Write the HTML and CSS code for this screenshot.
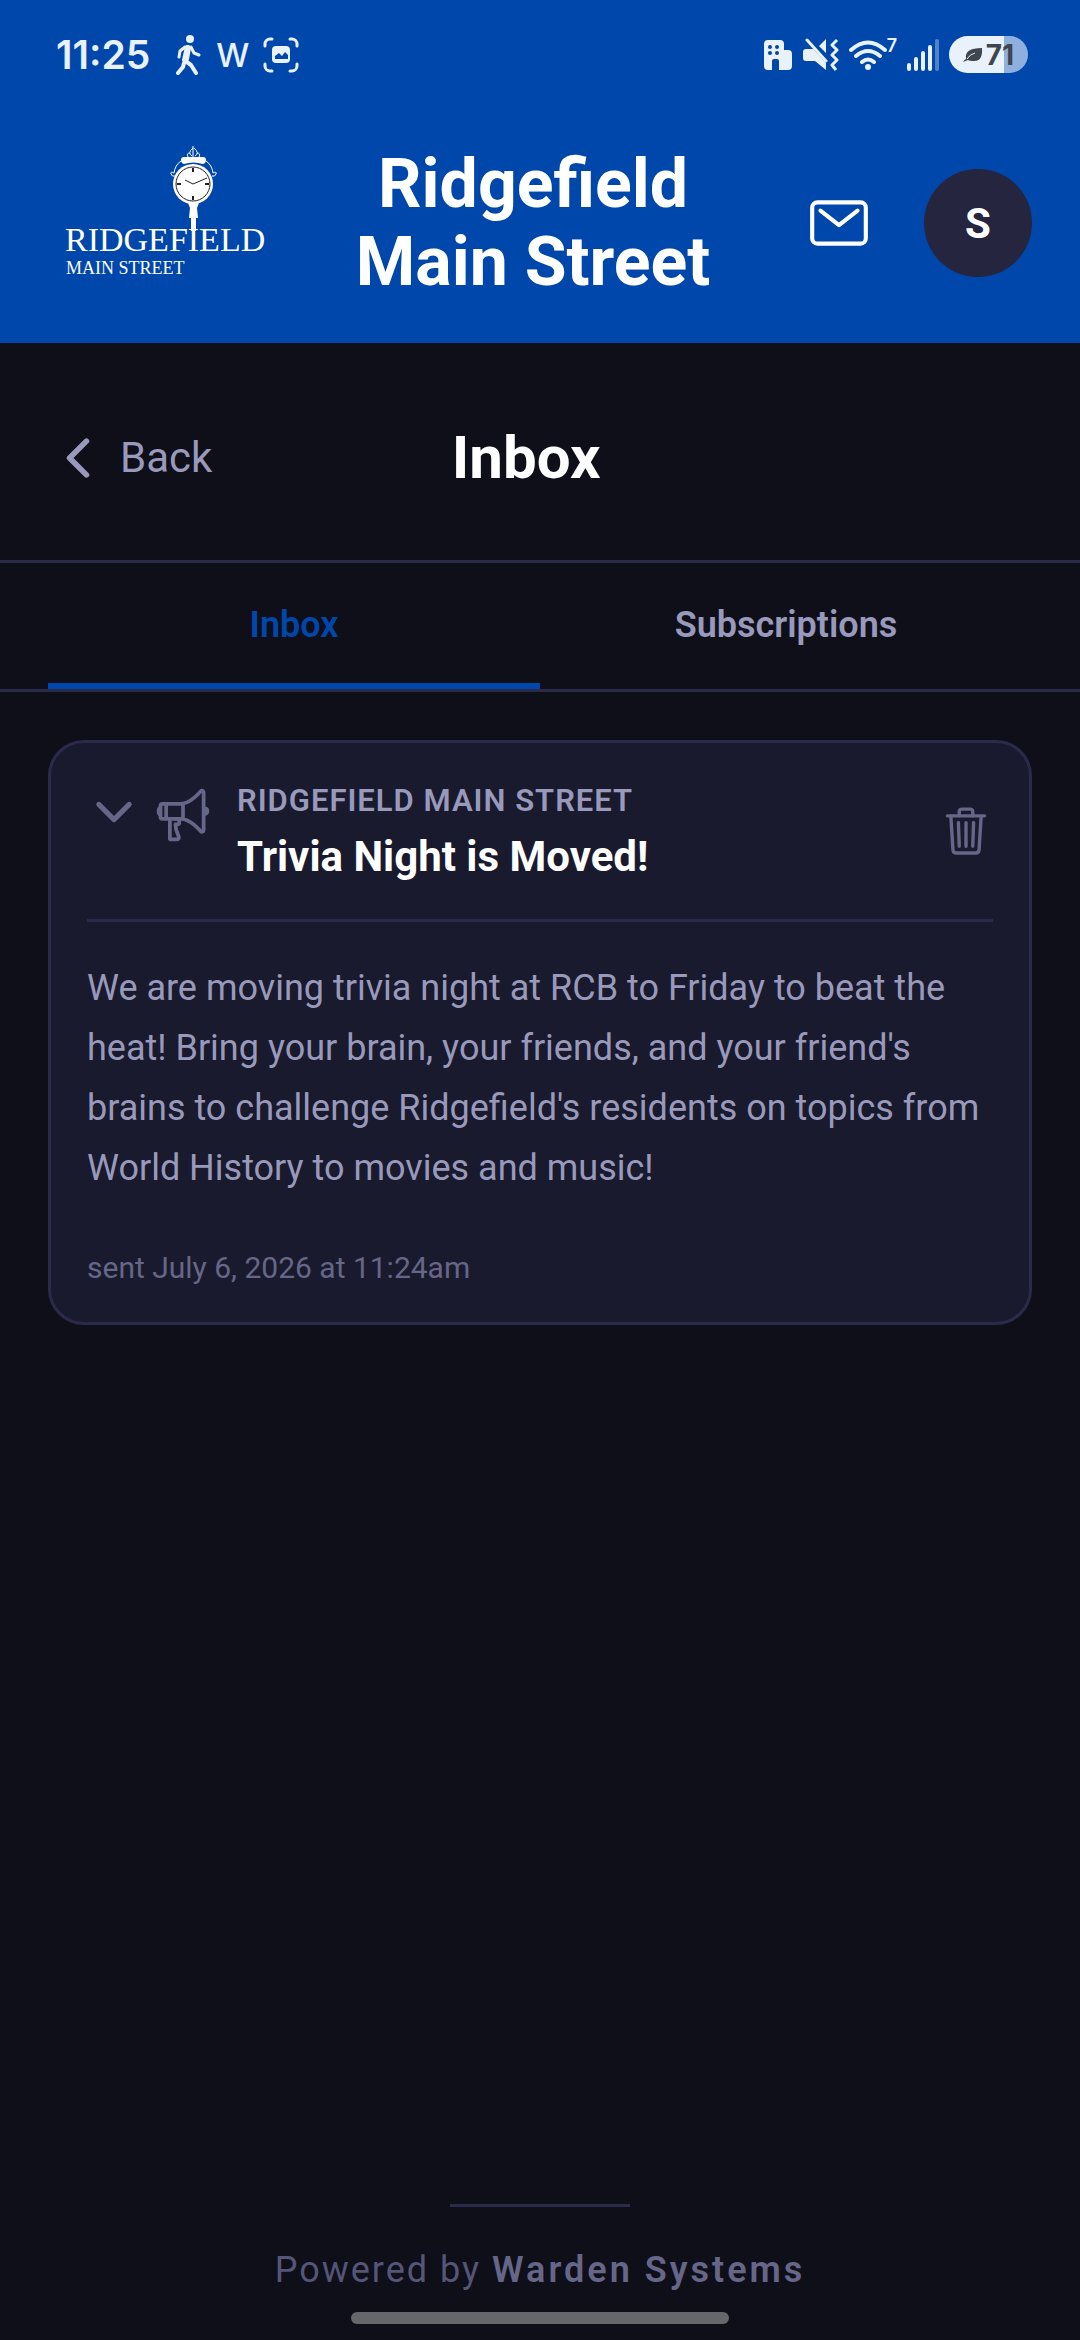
FILE: index.html
```html
<!DOCTYPE html>
<html lang="en">
<head>
  <meta charset="UTF-8">
  <meta name="viewport" content="width=device-width, initial-scale=1.0">
  <title>Inbox - Ridgefield Main Street</title>
  <link rel="stylesheet" href="styles.css">
</head>
<body>
  <header class="top">
    <div class="status">
      <div class="status-left">
        <span class="clock">11:25</span>
        <svg width="26" height="40" viewBox="0 0 26 40" fill="none" stroke="#e9f1fb" stroke-width="4" stroke-linecap="round" stroke-linejoin="round">
          <circle cx="14" cy="4" r="4" fill="#e9f1fb" stroke="none"/>
          <path d="M11 12L8 25l7 5 5 8" stroke-width="4"/>
          <path d="M12 13l-2 11" stroke-width="6"/>
          <path d="M8 28l-1 4-5 6" stroke-width="4"/>
          <path d="M9 12l-5 4-1 6M15 12l3 6 5 2" stroke-width="3"/>
        </svg>
        <span class="wear">W</span>
        <svg width="36" height="36" viewBox="0 0 36 36" fill="none" stroke="#e9f1fb" stroke-width="3" stroke-linecap="round">
          <path d="M2 9V7a5 5 0 015-5h2M27 2h2a5 5 0 015 5v2M34 27v2a5 5 0 01-5 5h-2M9 34H7a5 5 0 01-5-5v-2"/>
          <rect x="9" y="9" width="18" height="17" rx="4" fill="#e9f1fb" stroke="none"/>
          <path d="M12 22v-3l4-3 3 3 3-4 3 3v4z" fill="#0047ab" stroke="none"/>
        </svg>
      </div>
      <div class="status-right">
        <svg width="30" height="32" viewBox="0 0 30 32">
          <path d="M5 1h12q4 0 4 4v6h4q4 0 4 4v12q0 4-4 4H16v-9q0-2-2-2h-3q-2 0-2 2v9H5q-4 0-4-4V5q0-4 4-4z" fill="#e9f1fb"/>
          <g fill="#0047ab"><circle cx="7" cy="8" r="2"/><circle cx="14" cy="8" r="2"/><circle cx="7" cy="14" r="2"/><circle cx="14" cy="14" r="2"/></g>
        </svg>
        <svg width="36" height="34" viewBox="0 0 36 34" fill="#e9f1fb">
          <path d="M3 11h8l12 13v8L12 23H3q-3 0-3-3v-6q0-3 3-3zM16 8l7-7v14z"/>
          <path d="M4 2l22 24" stroke="#0047ab" stroke-width="3"/>
          <path d="M4 2l19 21" stroke="#e9f1fb" stroke-width="3" stroke-linecap="round"/>
          <path d="M34 2l-5 5 5 5-5 5 5 5-5 5 4 5" fill="none" stroke="#e9f1fb" stroke-width="3" stroke-linejoin="round"/>
        </svg>
        <span class="wifi">
          <svg width="38" height="32" viewBox="0 0 38 32" fill="none" stroke="#e9f1fb" stroke-width="4" stroke-linecap="round">
            <path d="M2 11q17-15 34 0M7 17q12-10 24 0M13 23q6-5 12 0"/>
            <circle cx="19" cy="28" r="3" fill="#e9f1fb" stroke="none"/>
          </svg>
          <sup>7</sup>
        </span>
        <svg width="32" height="34" viewBox="0 0 32 34" stroke="#e9f1fb" stroke-width="4" stroke-linecap="round">
          <path d="M2 27v4M9 21v10M16 15v16M23 9v22"/>
          <path d="M30 3v28" opacity=".35"/>
        </svg>
        <span class="battery">
          <svg width="20" height="16" viewBox="0 0 20 16"><path d="M19 1q1 14-9 13-4 0-5-1l-5 2q1-2 3-3-2-11 16-11z" fill="#41454f"/><path d="M4 12q3-5 8-6" fill="none" stroke="#e9f1fb" stroke-width="1"/></svg>
          71
        </span>
      </div>
    </div>

    <div class="brand">
      <svg class="logo" viewBox="0 0 224 156" role="img" aria-label="Ridgefield Main Street logo">
        <!-- finial and side scrolls -->
        <g fill="none" stroke="#fff" stroke-width="1">
          <path d="M145 1v11M145 3q-6 5-1 8M146 3q6 5 1 8M140 12q-2-4 2-4M151 12q2-4-2-4"/>
          <path d="M133 16q-6 4-7 12M126 28q-4-2-3 1t4 2M158 16q6 4 7 12M165 28q4-2 3 1t-4 2"/>
        </g>
        <path d="M136 12h19q3 0 3 3t-3 4q-10-3-19 0-3-1-3-4t3-3z" fill="#fff"/>
        <circle cx="145" cy="39" r="20" fill="#fff"/>
        <circle cx="145" cy="39" r="17" fill="#fff" stroke="#222" stroke-width="1"/>
        <path d="M145 23v4M145 51v4M129 39h4M157 39h4" stroke="#222" stroke-width="2"/>
        <path d="M137 35l8 4 14-6" fill="none" stroke="#222" stroke-width="1"/>
        <path d="M140 58h11l-2 5 1 10h-2v13h-5V73h-2l1-10z" fill="#fff"/>
        <text class="logo-name" x="17" y="106">RIDGEFIELD</text>
        <text class="logo-sub" x="18" y="129">MAIN STREET</text>
      </svg>
      <h1>Ridgefield Main Street</h1>
      <div class="actions">
        <button type="button" class="mail" aria-label="Messages">
          <svg width="66" height="66" viewBox="0 0 512 512" class="line-icon">
            <rect x="48" y="96" width="416" height="320" rx="40" ry="40"/>
            <path d="M112 160l144 112 144-112"/>
          </svg>
        </button>
        <button type="button" class="avatar">S</button>
      </div>
    </div>
  </header>

  <div class="page-head">
    <a href="#" class="back">
      <svg width="60" height="60" viewBox="0 0 512 512" class="line-icon thick"><path d="M328 112L184 256l144 144"/></svg>
      <span>Back</span>
    </a>
    <h2>Inbox</h2>
    <div class="spacer"></div>
  </div>

  <nav class="tabs">
    <button type="button" class="tab active">Inbox</button>
    <button type="button" class="tab">Subscriptions</button>
  </nav>

  <main>
    <article class="card">
      <div class="card-head">
        <button type="button" class="icon-btn toggle" aria-label="Collapse">
          <svg width="54" height="54" viewBox="0 0 512 512" class="line-icon thick"><path d="M112 184l144 144 144-144"/></svg>
        </button>
        <svg width="60" height="60" viewBox="0 0 512 512" class="line-icon megaphone">
          <path d="M407.940 52.220S321.300 160 240 160H80a16 16 0 00-16 16v96a16 16 0 0016 16h160c81.300 0 167.940 108.230 167.940 108.230 6.060 8 24.060 2.520 24.060-9.830V62c0-12.310-17-18.820-24.060-9.780zM64 256s-16-6-16-32 16-32 16-32M448 246s16-4.330 16-22-16-22-16-22M256 160v128M112 160v128"/>
          <path d="M144 288v168a8 8 0 008 8h53a16 16 0 0015.290-20.730C211.910 416.390 192 386.080 192 336h16a16 16 0 0016-16v-16a16 16 0 00-16-16h-16"/>
        </svg>
        <div class="card-title">
          <p>RIDGEFIELD MAIN STREET</p>
          <h3>Trivia Night is Moved!</h3>
        </div>
        <button type="button" class="icon-btn" aria-label="Delete">
          <svg width="54" height="54" viewBox="0 0 512 512" class="line-icon">
            <path d="M112 112l20 320c.95 18.490 14.400 32 32 32h184c17.670 0 30.870-13.510 32-32l20-320M80 112h352"/>
            <path d="M192 112V72a24 24 0 0124-24h80a24 24 0 0124 24v40M256 176v224M184 176l8 224M328 176l-8 224"/>
          </svg>
        </button>
      </div>
      <div class="card-body">
        <p class="message">We are moving trivia night at RCB to Friday to beat the heat! Bring your brain, your friends, and your friend's brains to challenge Ridgefield's residents on topics from World History to movies and music!</p>
        <p class="sent">sent July 6, 2026 at 11:24am</p>
      </div>
    </article>
  </main>

  <footer>
    <div class="rule"></div>
    <p>Powered by <strong>Warden Systems</strong></p>
    <div class="home-bar"></div>
  </footer>
</body>
</html>
```

FILE: styles.css
```css
* {
  box-sizing: border-box;
}

body {
  margin: 0;
  min-height: 100vh;
  display: flex;
  flex-direction: column;
  background: #0f0f1a;
  color: #9999bb;
  font-family: Roboto, "Liberation Sans", sans-serif;
  font-size: 36px;
}

h1, h2, h3, p {
  margin: 0;
}

button {
  border: 0;
  padding: 0;
  background: none;
  color: inherit;
  font: inherit;
  cursor: pointer;
}

svg {
  display: block;
  flex: none;
}

.line-icon {
  fill: none;
  stroke: currentColor;
  stroke-width: 32px;
  stroke-linecap: round;
  stroke-linejoin: round;
}

.line-icon.thick {
  stroke-width: 48px;
}

/* status bar + brand */
.top {
  background: #0047ab;
  color: #fff;
}

.status {
  display: flex;
  justify-content: space-between;
  align-items: center;
  height: 103px;
  padding: 6px 52px 0 56px;
  color: #e9f1fb;
  font-family: Inter, sans-serif;
}

.status-left,
.status-right {
  display: flex;
  align-items: center;
  gap: 10px;
}

.status-left {
  gap: 14px;
}

.clock {
  margin-right: 12px;
  font-size: 39px;
  font-weight: 600;
}

.wear {
  font-size: 33px;
  font-weight: 500;
}

.wifi {
  display: flex;
}

.wifi sup {
  font-size: 18px;
  line-height: 14px;
  font-weight: 600;
}

.battery {
  display: flex;
  align-items: center;
  justify-content: center;
  gap: 3px;
  width: 79px;
  height: 37px;
  border-radius: 19px;
  background: linear-gradient(90deg, #e9f1fb 70%, #8fb0de 70%);
  color: #41454f;
  font-size: 28px;
  font-weight: 700;
}

.brand {
  display: flex;
  align-items: center;
  gap: 12px;
  padding: 42px 48px;
}

.logo {
  width: 224px;
  height: 156px;
}

.logo text {
  fill: #fff;
  font-family: "Liberation Serif", serif;
}

.logo-name {
  font-size: 34px;
}

.logo-sub {
  font-size: 18px;
}

.brand h1 {
  flex: 1;
  padding: 0 48px;
  text-align: center;
  font-size: 68px;
  line-height: 78px;
  font-weight: 700;
}

.actions {
  display: flex;
  align-items: center;
  gap: 40px;
}

.mail {
  padding: 12px;
}

.avatar {
  width: 108px;
  height: 108px;
  border-radius: 50%;
  background: #25253f;
  color: #fff;
  font-size: 42px;
  font-weight: 700;
}

/* page heading */
.page-head {
  display: flex;
  align-items: center;
  justify-content: space-between;
  height: 220px;
  padding: 12px 48px 0;
  border-bottom: 3px solid #2a2a4a;
}

.back {
  display: flex;
  align-items: center;
  gap: 12px;
  color: inherit;
  text-decoration: none;
  font-size: 42px;
}

.page-head h2 {
  color: #fff;
  font-size: 60px;
  font-weight: 700;
}

.spacer {
  width: 192px;
}

.tabs {
  display: flex;
  padding: 0 48px;
  border-bottom: 3px solid #2a2a4a;
}

.tab {
  flex: 1;
  height: 126px;
  padding-top: 3px;
  border-bottom: 6px solid transparent;
  font-weight: 600;
}

.tab.active {
  color: #0047ab;
  border-bottom-color: #0047ab;
}

main {
  flex: 1;
  padding: 48px;
}

/* message card */
.card {
  padding: 36px;
  border: 3px solid #2a2a4a;
  border-radius: 36px;
  background: #1a1a2e;
}

.card-head {
  display: flex;
  align-items: center;
  padding-bottom: 36px;
  border-bottom: 3px solid #2a2a4a;
}

.icon-btn,
.megaphone {
  color: #666688;
}

.toggle,
.megaphone {
  align-self: flex-start;
  margin: 6px 12px 0 0;
}

.card-title {
  flex: 1;
  margin-left: 12px;
}

.card-title p {
  font-size: 31px;
  line-height: 44px;
  font-weight: 600;
  letter-spacing: 1px;
}

.card-title h3 {
  margin-top: 8px;
  color: #fff;
  font-size: 42px;
  line-height: 52px;
  font-weight: 700;
}

.card-body {
  padding-top: 36px;
}

.message {
  line-height: 60px;
}

.sent {
  margin-top: 52px;
  color: #666688;
  font-size: 30px;
  line-height: 36px;
}

footer {
  display: flex;
  flex-direction: column;
  align-items: center;
  padding-bottom: 16px;
  color: #555577;
}

.rule {
  width: 180px;
  height: 3px;
  background: #2a2a4a;
}

footer p {
  margin: 39px 0 18px;
  line-height: 48px;
  letter-spacing: 2px;
}

footer strong {
  color: #666688;
  font-weight: 600;
  letter-spacing: 3px;
}

.home-bar {
  width: 35%;
  height: 12px;
  border-radius: 6px;
  background: #66676b;
}
```
